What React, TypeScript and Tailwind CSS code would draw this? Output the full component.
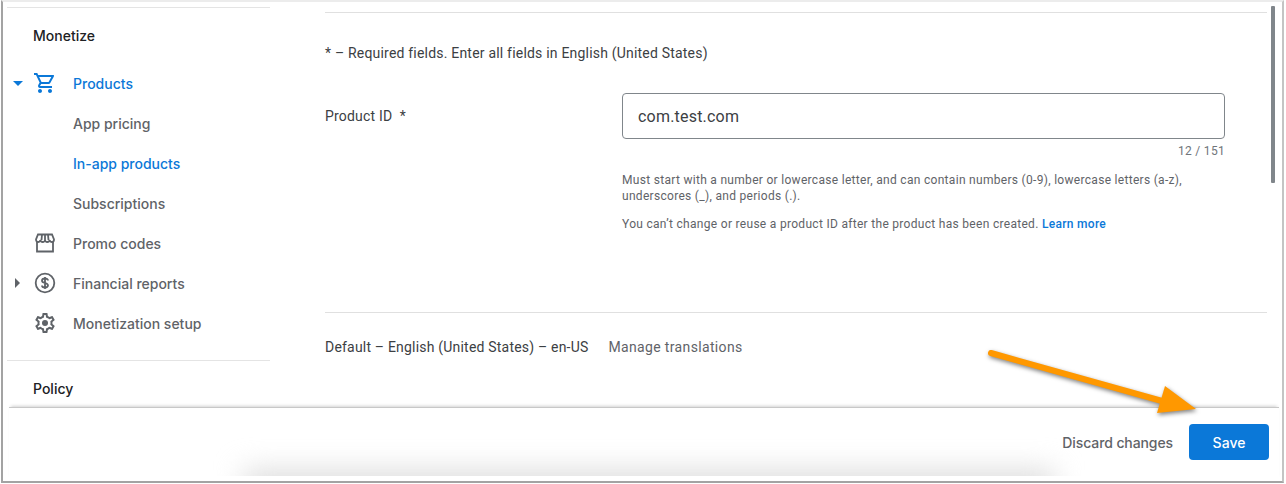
import React from "react";

function Row({ label, color = "text-[#5f6368]", icon, caret }: { label: string; color?: string; icon?: React.ReactNode; caret?: React.ReactNode }) {
  return (
    <div className="flex items-center h-10">
      <div className="w-[26px] flex justify-center pr-[5px]">{caret}</div>
      <div className="w-10 flex">{icon}</div>
      <span className={`text-[14px] font-medium [font-family:Inter,sans-serif] ${color}`}>{label}</span>
    </div>
  );
}

export default function App() {
  return (
    <div className="w-[1286px] h-[484px] bg-white overflow-hidden [font-family:Roboto,sans-serif]">
      <div className="relative w-[1283px] h-[483px] border-l-2 border-b-2 border-r-2 border-[#a3a3a3] border-r-[#c4c4c4] border-t-[#ececec] border-t-2 ml-px overflow-hidden flex flex-col">
        <div className="flex min-h-0 h-[405px]">
          {/* Sidebar */}
          <div className="w-[263px] ml-[4px] shrink-0 pt-[5px]">
            <div className="h-px bg-[#e4e4e4]" />
            <div className="pl-[26px] pt-[17px] h-[55px] text-[14px] font-medium text-[#202124] [font-family:Inter,sans-serif]">Monetize</div>
            <div>
              <Row
                label="Products"
                color="text-[#0b78d8]"
                caret={<svg width="10" height="5" viewBox="0 0 10 5"><path d="M0 0h10L5 5z" fill="#0b78d8" /></svg>}
                icon={
                  <svg width="24" height="24" viewBox="0 0 24 24" fill="#0b78d8">
                    <path d="M15.55 13c.75 0 1.410-.41 1.750-1.030l3.580-6.490A.996.996 0 0 0 20.010 4H5.210l-.94-2H1v2h2l3.600 7.590-1.350 2.440C4.520 15.370 5.480 17 7 17h12v-2H7l1.100-2h7.450zM6.160 6h12.150l-2.760 5H8.530L6.160 6zM7 18c-1.100 0-1.990.9-1.990 2S5.900 22 7 22s2-.9 2-2-.9-2-2-2zm10 0c-1.100 0-1.990.9-1.990 2s.89 2 1.990 2 2-.9 2-2-.9-2-2-2z" />
                  </svg>
                }
              />
              <Row label="App pricing" />
              <Row label="In-app products" color="text-[#0b78d8]" />
              <Row label="Subscriptions" />
              <Row
                label="Promo codes"
                icon={
                  <svg width="24" height="24" viewBox="0 0 24 24" fill="none" stroke="#5f6368" strokeWidth="1.8">
                    <path d="M5 3.500h14l2 5c0 1.500-1 2.500-2 2.500-1.300 0-2.200-1-2.300-2-.2 1-1.200 2-2.400 2s-2.200-1-2.300-2c-.1 1-1.100 2-2.300 2s-2.200-1-2.400-2c-.1 1-1 2-2.300 2-1 0-2-1-2-2.500z" />
                    <path d="M4 11v9.500h16V11M9 3.500 8.500 9M15 3.500l.5 5.500M12 3.500V9" />
                  </svg>
                }
              />
              <Row
                label="Financial reports"
                caret={<svg width="5" height="10" viewBox="0 0 5 10"><path d="M0 0v10l5-5z" fill="#5f6368" /></svg>}
                icon={
                  <svg width="24" height="24" viewBox="0 0 24 24" fill="none" stroke="#5f6368" strokeWidth="1.8">
                    <circle cx="12" cy="12" r="9.300" />
                    <path d="M15 9.500c0-1.300-1.300-2-3-2s-3 .8-3 2.200c0 3 6 1.600 6 4.600 0 1.400-1.300 2.200-3 2.200s-3-.8-3-2M12 6v12" />
                  </svg>
                }
              />
              <Row
                label="Monetization setup"
                icon={
                  <svg width="24" height="24" viewBox="0 0 24 24" fill="#5f6368">
                    <path d="M19.430 12.980c.04-.32.07-.64.07-.98 0-.34-.03-.66-.07-.98l2.110-1.650c.19-.15.24-.42.12-.64l-2-3.460c-.09-.16-.26-.25-.44-.25-.06 0-.12.01-.17.03l-2.490 1c-.52-.4-1.080-.73-1.690-.98l-.38-2.650C14.460 2.180 14.250 2 14 2h-4c-.25 0-.46.18-.49.42l-.38 2.650c-.61.25-1.170.59-1.690.98l-2.490-1c-.06-.02-.12-.03-.18-.03-.17 0-.34.09-.43.25l-2 3.460c-.13.22-.07.49.12.64l2.110 1.650c-.04.32-.07.65-.07.98 0 .33.03.66.07.98l-2.110 1.650c-.19.15-.24.42-.12.64l2 3.460c.09.16.26.25.44.25.06 0 .12-.01.17-.03l2.490-1c.52.4 1.080.73 1.690.98l.38 2.650c.03.24.24.42.49.42h4c.25 0 .46-.18.49-.42l.38-2.650c.61-.25 1.170-.59 1.690-.98l2.490 1c.06.02.12.03.18.03.17 0 .34-.09.43-.25l2-3.460c.12-.22.07-.49-.12-.64l-2.110-1.650zm-1.980-1.710c.04.31.05.52.05.73 0 .21-.02.43-.05.73l-.14 1.130.89.7 1.080.84-.7 1.210-1.270-.51-1.040-.42-.9.68c-.43.32-.84.56-1.250.73l-1.060.43-.16 1.130-.2 1.350h-1.400l-.19-1.350-.16-1.130-1.060-.43c-.43-.18-.83-.41-1.230-.71l-.91-.7-1.060.43-1.270.51-.7-1.210 1.080-.84.89-.7-.14-1.130c-.03-.31-.05-.54-.05-.74s.02-.43.05-.73l.14-1.130-.89-.7-1.080-.84.7-1.210 1.270.51 1.040.42.9-.68c.43-.32.84-.56 1.250-.73l1.060-.43.16-1.130.2-1.350h1.390l.19 1.350.16 1.130 1.060.43c.43.18.83.41 1.230.71l.91.7 1.060-.43 1.270-.51.7 1.210-1.070.85-.89.7.14 1.130z" />
                    <circle cx="12" cy="12" r="3" />
                  </svg>
                }
              />
            </div>
            <div className="h-px bg-[#e4e4e4] mt-[17px]" />
            <div className="pl-[26px] pt-[17px] text-[14px] font-medium text-[#202124] [font-family:Inter,sans-serif]">Policy</div>
          </div>
          {/* Main */}
          <div className="ml-[55px] w-[942px] shrink-0 pt-[10px]">
            <div className="h-px bg-[#e0e0e0]" />
            <p className="mt-[30px] text-[14px] leading-[20px] tracking-[0.2px] text-[#3c4043]">* – Required fields. Enter all fields in English (United States)</p>
            <div className="flex mt-[30px]">
              <div className="w-[297px] pt-[13px] text-[14px] leading-[20px] tracking-[0.2px] text-[#3c4043]">Product ID&nbsp; *</div>
              <div className="w-[603px]">
                <div className="h-[46px] border border-[#80868b] rounded-[4px] flex items-center px-[15px] pt-[2px] text-[16px] tracking-[0.2px] text-[#3c4043]">com.test.com</div>
                <div className="text-right text-[12px] leading-[16px] tracking-[0.3px] text-[#70757a] mt-[4px]">12 / 151</div>
                <p className="mt-[13px] text-[12px] leading-[16px] tracking-[0.3px] text-[#5f6368]">Must start with a number or lowercase letter, and can contain numbers (0-9), lowercase letters (a-z), underscores (_), and periods (.).</p>
                <p className="mt-[12px] text-[12px] leading-[16px] tracking-[0.3px] text-[#5f6368]">You can’t change or reuse a product ID after the product has been created. <span className="text-[#0b78d8] font-medium">Learn more</span></p>
              </div>
            </div>
            <div className="h-px bg-[#e0e0e0] mt-[80px]" />
            <div className="flex mt-[24px] text-[14px] leading-[20px] tracking-[0.2px]">
              <span className="text-[#3c4043]">Default – English (United States) – en-US</span>
              <span className="ml-[20px] text-[#5f6368] tracking-[0.35px]">Manage translations</span>
            </div>
          </div>
          <div className="ml-[4px] w-[4px] h-[177px] mt-[4px] bg-[#80868b] rounded-[1px]" />
        </div>
        {/* Footer */}
        <div className="relative flex-1 ml-[6px] mr-[3px] bg-white flex justify-end items-start shadow-[0_-3px_3px_-2px_rgba(0,0,0,0.18)] border-t border-[#c8c8c8]">
          <div className="absolute left-[180px] top-[20px] w-[920px] h-[48px] overflow-hidden">
            <div className="ml-[55px] w-[810px] h-[30px] mt-[42px] bg-[#dcdcdc] blur-[14px]" />
          </div>
          <div className="relative flex items-center mt-[16px] mr-[10px]">
            <span className="text-[14px] font-medium tracking-[-0.1px] text-[#5f6368] mr-[16px] [font-family:Inter,sans-serif]">Discard changes</span>
            <button className="w-[80px] h-[36px] bg-[#0b78d8] rounded-[4px] text-white text-[14px] font-medium [font-family:Inter,sans-serif]">Save</button>
          </div>
        </div>
        {/* Arrow annotation */}
        <svg className="absolute left-[975px] top-[333px] drop-shadow-[1px_2px_2px_rgba(0,0,0,0.5)]" width="240" height="90" viewBox="0 0 240 90">
          <path d="M13 18 184 66" stroke="#ff9800" strokeWidth="6" strokeLinecap="round" />
          <path d="M187 51 218 74 179 78z" fill="#ff9800" />
        </svg>
      </div>
    </div>
  );
}
